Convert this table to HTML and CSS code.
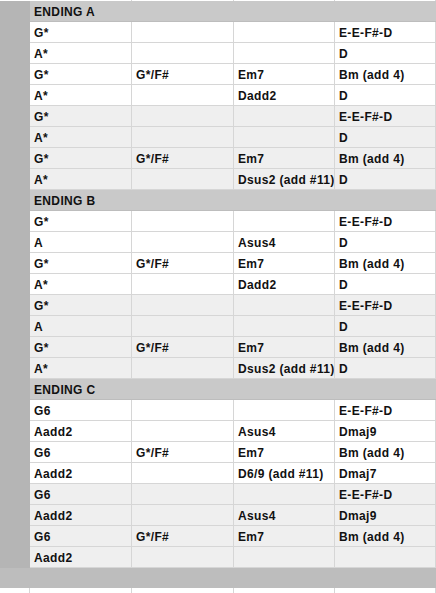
FILE: index.html
```html
<!DOCTYPE html>
<html>
<head>
<meta charset="utf-8">
<link rel="stylesheet" href="styles.css">
</head>
<body>
<div class="sheet">
  <div class="row strip"><div class="gut"></div><div class="c"></div><div class="c"></div><div class="c"></div><div class="c"></div></div>

  <div class="row hdr"><div class="gut"></div><div class="span">ENDING A</div></div>
  <div class="row"><div class="gut"></div><div class="c">G*</div><div class="c"></div><div class="c"></div><div class="c">E-E-F#-D</div></div>
  <div class="row"><div class="gut"></div><div class="c">A*</div><div class="c"></div><div class="c"></div><div class="c">D</div></div>
  <div class="row"><div class="gut"></div><div class="c">G*</div><div class="c">G*/F#</div><div class="c">Em7</div><div class="c">Bm (add 4)</div></div>
  <div class="row"><div class="gut"></div><div class="c">A*</div><div class="c"></div><div class="c">Dadd2</div><div class="c">D</div></div>
  <div class="row alt"><div class="gut"></div><div class="c">G*</div><div class="c"></div><div class="c"></div><div class="c">E-E-F#-D</div></div>
  <div class="row alt"><div class="gut"></div><div class="c">A*</div><div class="c"></div><div class="c"></div><div class="c">D</div></div>
  <div class="row alt"><div class="gut"></div><div class="c">G*</div><div class="c">G*/F#</div><div class="c">Em7</div><div class="c">Bm (add 4)</div></div>
  <div class="row alt"><div class="gut"></div><div class="c">A*</div><div class="c"></div><div class="c">Dsus2 (add #11)</div><div class="c">D</div></div>

  <div class="row hdr"><div class="gut"></div><div class="span">ENDING B</div></div>
  <div class="row"><div class="gut"></div><div class="c">G*</div><div class="c"></div><div class="c"></div><div class="c">E-E-F#-D</div></div>
  <div class="row"><div class="gut"></div><div class="c">A</div><div class="c"></div><div class="c">Asus4</div><div class="c">D</div></div>
  <div class="row"><div class="gut"></div><div class="c">G*</div><div class="c">G*/F#</div><div class="c">Em7</div><div class="c">Bm (add 4)</div></div>
  <div class="row"><div class="gut"></div><div class="c">A*</div><div class="c"></div><div class="c">Dadd2</div><div class="c">D</div></div>
  <div class="row alt"><div class="gut"></div><div class="c">G*</div><div class="c"></div><div class="c"></div><div class="c">E-E-F#-D</div></div>
  <div class="row alt"><div class="gut"></div><div class="c">A</div><div class="c"></div><div class="c"></div><div class="c">D</div></div>
  <div class="row alt"><div class="gut"></div><div class="c">G*</div><div class="c">G*/F#</div><div class="c">Em7</div><div class="c">Bm (add 4)</div></div>
  <div class="row alt"><div class="gut"></div><div class="c">A*</div><div class="c"></div><div class="c">Dsus2 (add #11)</div><div class="c">D</div></div>

  <div class="row hdr"><div class="gut"></div><div class="span">ENDING C</div></div>
  <div class="row"><div class="gut"></div><div class="c">G6</div><div class="c"></div><div class="c"></div><div class="c">E-E-F#-D</div></div>
  <div class="row"><div class="gut"></div><div class="c">Aadd2</div><div class="c"></div><div class="c">Asus4</div><div class="c">Dmaj9</div></div>
  <div class="row"><div class="gut"></div><div class="c">G6</div><div class="c">G*/F#</div><div class="c">Em7</div><div class="c">Bm (add 4)</div></div>
  <div class="row"><div class="gut"></div><div class="c">Aadd2</div><div class="c"></div><div class="c">D6/9 (add #11)</div><div class="c">Dmaj7</div></div>
  <div class="row alt"><div class="gut"></div><div class="c">G6</div><div class="c"></div><div class="c"></div><div class="c">E-E-F#-D</div></div>
  <div class="row alt"><div class="gut"></div><div class="c">Aadd2</div><div class="c"></div><div class="c">Asus4</div><div class="c">Dmaj9</div></div>
  <div class="row alt"><div class="gut"></div><div class="c">G6</div><div class="c">G*/F#</div><div class="c">Em7</div><div class="c">Bm (add 4)</div></div>
  <div class="row alt"><div class="gut"></div><div class="c">Aadd2</div><div class="c"></div><div class="c"></div><div class="c"></div></div>

  <div class="band"></div>
  <div class="row tail"><div class="gut"></div><div class="c"></div><div class="c"></div><div class="c"></div><div class="c"></div></div>
</div>
</body>
</html>
```
FILE: styles.css
```css
html, body {
  margin: 0;
  padding: 0;
  background: #ffffff;
}
body {
  font-family: "Liberation Sans", Arial, sans-serif;
  font-weight: bold;
  font-size: 12px;
  letter-spacing: 0.35px;
  color: #111111;
  overflow: hidden;
}
.sheet {
  width: 436px;
}
.row {
  display: grid;
  grid-template-columns: 30px 102px 102px 101px 101px;
  height: 21px;
  background: #ffffff;
}
.row.alt {
  background: #efefef;
}
.gut {
  background: #b5b5b5;
}
.c {
  box-sizing: border-box;
  border-right: 1px solid #d6d6d6;
  border-bottom: 1px solid #d6d6d6;
  padding: 3px 0 0 4px;
  line-height: 17px;
  white-space: nowrap;
  overflow: hidden;
}
.row.hdr {
  background: #c9c9c9;
}
.span {
  grid-column: 2 / 6;
  box-sizing: border-box;
  border-bottom: 1px solid #bdbdbd;
  padding: 3px 0 0 4px;
  line-height: 17px;
  white-space: nowrap;
}
.row.strip {
  height: 1px;
}
.row.strip .gut {
  background: #ffffff;
}
.row.strip .c {
  padding: 0;
  border-bottom: none;
}
.band {
  height: 20px;
  background: #bdbdbd;
}
.row.tail {
  height: 5px;
}
.row.tail .gut {
  background: #ffffff;
  border-right: 1px solid #d6d6d6;
}
.row.tail .c {
  padding: 0;
  border-bottom: none;
}
```
